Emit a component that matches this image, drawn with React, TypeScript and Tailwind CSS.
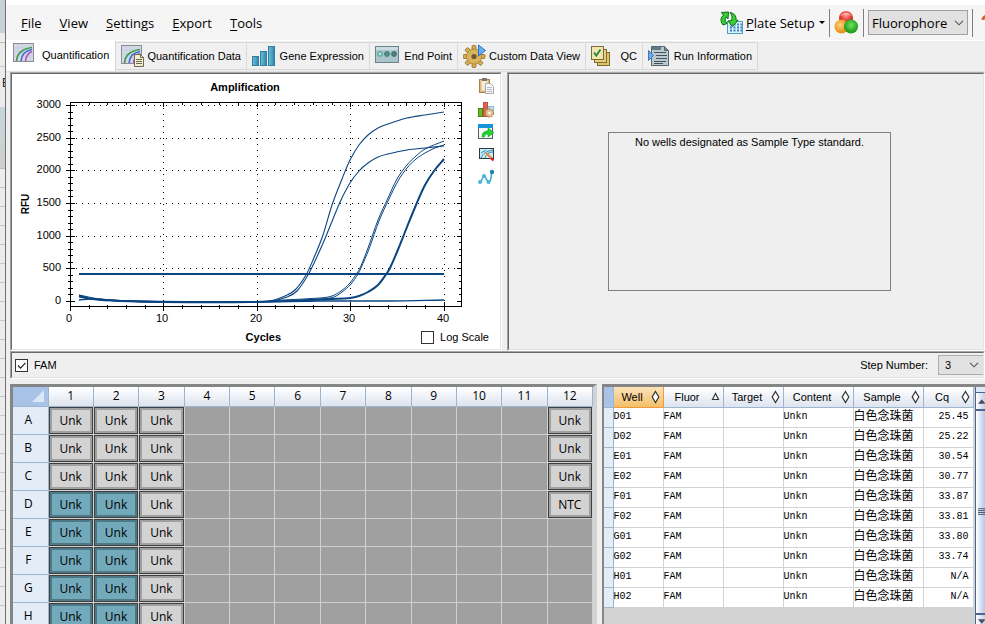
import React from 'react';

const BLUE = '#0b4580';

const Sunken = ({ className = '', children }: { className?: string; children?: React.ReactNode }) => (
  <div className={`border border-t-[#a8a8a8] border-l-[#a0a0a0] border-r-white border-b-white ${className}`}>
    <div className="flex h-full flex-col border border-t-[#696969] border-l-[#696969] border-r-[#e3e3e3] border-b-[#e3e3e3]">
      {children}
    </div>
  </div>
);

/* ---------- icons ---------- */

const CurveBox = () => (
  <>
    <rect x="0.5" y="0.5" width="20" height="18" fill="#d5dae6" stroke="#8b8b93" />
    <path d="M5 1v17M9 1v17M13 1v17M17 1v17M1 5h19M1 9h19M1 13h19" stroke="#c2c9d8" strokeWidth="0.7" />
    <path d="M3.5 18C4 11 8 6 19 4.500" fill="none" stroke="#3d9a4c" strokeWidth="1.6" />
    <path d="M8 18C8.500 12 11 8 19 6.500" fill="none" stroke="#3d6fd0" strokeWidth="1.6" />
    <path d="M12.500 18C13 13 15 10 19 8.500" fill="none" stroke="#b04cc8" strokeWidth="1.6" />
  </>
);

const QuantIcon = () => (
  <svg width="21" height="20" viewBox="0 0 21 20">
    <CurveBox />
  </svg>
);

const QuantDataIcon = () => (
  <svg width="24" height="23" viewBox="0 0 24 23">
    <CurveBox />
    <path d="M13.500 9.500h6l3 3v9h-9z" fill="#f3eecb" stroke="#6d6a55" />
    <path d="M19.500 9.500v3h3M15 14.500h6M15 16.500h6M15 18.500h6" fill="none" stroke="#6d6a55" />
  </svg>
);

const BarsIcon = () => (
  <svg width="24" height="22" viewBox="0 0 24 22">
    <defs>
      <linearGradient id="bars" x1="0" x2="1">
        <stop offset="0" stopColor="#6fc3de" />
        <stop offset="1" stopColor="#2f83a8" />
      </linearGradient>
    </defs>
    <rect x="0.500" y="11.500" width="6" height="9" fill="url(#bars)" stroke="#2f7f9f" />
    <rect x="8.500" y="6.500" width="6" height="14" fill="url(#bars)" stroke="#2f7f9f" />
    <rect x="16.500" y="1.500" width="6" height="19" fill="url(#bars)" stroke="#2f7f9f" />
  </svg>
);

const EndPointIcon = () => (
  <svg width="24" height="20" viewBox="0 0 24 20">
    <rect x="0.500" y="0.500" width="23" height="16" fill="#a9c4ca" stroke="#6a8288" />
    <path d="M1 1h22v3H1z" fill="#c9dde1" />
    <circle cx="5" cy="8" r="2.200" fill="#a8f0e0" stroke="#3b8f84" />
    <circle cx="12" cy="8" r="2.400" fill="#4f9089" stroke="#3d7a74" />
    <circle cx="19" cy="8" r="2.400" fill="#4f7f7c" stroke="#3d6f6c" />
  </svg>
);

const teeth = [0, 45, 90, 135, 180, 225, 270, 315];

const GearIcon = () => (
  <svg width="24" height="24" viewBox="0 0 24 24">
    <g transform="translate(11 12.500)">
      {teeth.map((a) => (
        <rect key={a} x="-2" y="-11" width="4" height="6" rx="1" fill="#d2ab52" stroke="#8f6d28" strokeWidth="0.800" transform={`rotate(${a})`} />
      ))}
      <circle r="7.500" fill="#dcb860" stroke="#a37f35" strokeWidth="0.800" />
      <circle r="6.800" fill="#d9b35b" />
      <circle r="2.600" fill="#6b5a35" />
    </g>
    <path d="M15.500 1v11l7-5.500z" fill="#6aaef0" stroke="#2f6fc0" />
  </svg>
);

const QcIcon = () => (
  <svg width="20" height="21" viewBox="0 0 20 21">
    <rect x="6.500" y="6.500" width="12" height="13" fill="#e0c468" stroke="#7d6b35" />
    <rect x="3.500" y="3.500" width="12" height="13" fill="#e8cf7c" stroke="#7d6b35" />
    <rect x="0.500" y="0.500" width="12" height="13" fill="#f2e6b0" stroke="#7d6b35" />
    <path d="M3 6.500l2.300 3L9.500 3.500" fill="none" stroke="#2f8a46" strokeWidth="2" />
  </svg>
);

const RunInfoIcon = () => (
  <svg width="22" height="21" viewBox="0 0 22 21">
    <path d="M3.500 0.500h13l4 4v15h-17z" fill="#b8c9d0" stroke="#56666e" />
    <path d="M16.500 0.500v4h4" fill="#6c8693" stroke="#56666e" />
    <path d="M4 1h9v3H4z" fill="#5f7986" />
    <path d="M6 6.500h12M8 9.500h11M8 12.500h11M6 15.500h12M6 17.500h9" stroke="#475258" />
    <path d="M0.500 4.500v10l5-5z" fill="#6aaef0" stroke="#3a78b8" />
  </svg>
);

const PlateSetupIcon = () => (
  <svg width="25" height="24" viewBox="0 0 25 24">
    <rect x="8.500" y="10.500" width="15" height="12" fill="#d8f1fb" stroke="#4e9fc4" />
    <path d="M11 13.500h12M11 16.500h12M11 19.500h12" stroke="#3b7fc0" strokeWidth="2" strokeDasharray="2 1.500" />
    <path d="M4 14C1 10 1.500 6 4.500 4.500L2.500 1.500 9.500 1 9 8 7 6C5.500 8 6 10 8 12.500z" fill="#35cf35" stroke="#11681a" />
    <path d="M11 1.500C15 2 17.500 5 17 9l2 .5-5.500 6L9 10l3.500-.5C13.500 6.500 13 4 11 1.500z" fill="#35d035" stroke="#11681a" />
  </svg>
);

const SpheresIcon = () => (
  <svg width="25" height="25" viewBox="0 0 25 25">
    <defs>
      <radialGradient id="sr" cy="0.3"><stop offset="0" stopColor="#ff9c90" /><stop offset="1" stopColor="#d8211c" /></radialGradient>
      <radialGradient id="so" cx="0.4" cy="0.4"><stop offset="0" stopColor="#ffd37a" /><stop offset="1" stopColor="#e8941c" /></radialGradient>
      <radialGradient id="sg" cy="0.4"><stop offset="0" stopColor="#6fe45c" /><stop offset="1" stopColor="#1f9e22" /></radialGradient>
    </defs>
    <circle cx="12" cy="8" r="7" fill="url(#sr)" />
    <circle cx="7.500" cy="16.500" r="7" fill="url(#so)" />
    <circle cx="17" cy="16.500" r="7" fill="url(#sg)" />
    <path d="M6 6C8 2 16 2 18 6c-3-1.500-9-1.500-12 0z" fill="#fff" opacity="0.400" />
  </svg>
);

const ClipboardIcon = () => (
  <svg width="16" height="17" viewBox="0 0 16 17">
    <rect x="0.500" y="1.500" width="10" height="13" fill="#dfb878" stroke="#a88448" />
    <rect x="2.500" y="2.500" width="6" height="10" fill="#f5ecd8" />
    <rect x="3" y="0" width="5" height="3" fill="#777" />
    <path d="M6.500 5.500h5l3 3v7h-8z" fill="#fafafa" stroke="#a8a8a8" />
    <path d="M8 9.500h5M8 11.500h5M8 13.500h5" stroke="#b5bcc5" />
  </svg>
);

const ChartSettingsIcon = () => (
  <svg width="17" height="16" viewBox="0 0 17 16">
    <rect x="10.500" y="4.500" width="5" height="8" fill="#bfe4f0" stroke="#82bdd2" />
    <rect x="5.500" y="0.500" width="4" height="14" fill="#df6258" stroke="#c04c44" />
    <rect x="0.500" y="6.500" width="4" height="8" fill="#6fb820" stroke="#3e8a10" />
    <circle cx="11.500" cy="11" r="3.800" fill="#e2bd8e" stroke="#b78e5b" strokeWidth="1.800" strokeDasharray="1.800 1" />
    <circle cx="11.500" cy="11" r="3.300" fill="#e2bd8e" />
    <circle cx="11.500" cy="11" r="1.300" fill="#fff" />
  </svg>
);

const ExportIcon = () => (
  <svg width="17" height="16" viewBox="0 0 17 16">
    <rect x="0.500" y="0.500" width="14" height="14" fill="#f4f7fa" stroke="#555f68" />
    <path d="M0 0h15v4H0z" fill="#1795dc" />
    <path d="M4 13C4 9 6 7 10 7V4l6 4.500-6 4.500v-3C7.500 10 6.500 11 6.500 13z" fill="#1fd52c" stroke="#109a1c" strokeWidth="0.600" />
  </svg>
);

const EditImageIcon = () => (
  <svg width="16" height="16" viewBox="0 0 16 16">
    <rect x="0.500" y="1.500" width="14" height="10" fill="#c9eef8" stroke="#303840" />
    <path d="M2 11C4 6 8 4 14 3M6 11c1-4 4-6 8-6M2 6l5-3" fill="none" stroke="#2a8bb0" />
    <path d="M7 6l6 6" stroke="#f08a3c" strokeWidth="2.400" />
    <path d="M12 11l2.500 2.500" stroke="#c02c2c" strokeWidth="2.400" />
  </svg>
);

const PointsIcon = () => (
  <svg width="17" height="17" viewBox="0 0 17 17">
    <path d="M2 13C3.500 14 4.500 7 6 7s3 6 5 6 2-6 3-10" fill="none" stroke="#36a5c8" strokeWidth="1.500" />
    <circle cx="2" cy="13" r="2" fill="#46b5d6" />
    <circle cx="6" cy="7" r="2" fill="#46b5d6" />
    <circle cx="10.500" cy="13" r="2" fill="#46b5d6" />
    <circle cx="14" cy="3" r="2.200" fill="#1f87ab" />
  </svg>
);

const Chevron = () => (
  <svg width="10" height="6" viewBox="0 0 10 6" className="pointer-events-none absolute right-1 top-1/2 -translate-y-1/2">
    <path d="M1 .8l4 4 4-4" fill="none" stroke="#555" strokeWidth="1.100" />
  </svg>
);

const CheckBox = ({ label, checked = false }: { label: string; checked?: boolean }) => (
  <label className="flex items-center gap-1.5 leading-4">
    <span className="grid">
      <input type="checkbox" defaultChecked={checked} className="peer col-start-1 row-start-1 size-[13px] appearance-none border border-[#333] bg-white" />
      <svg viewBox="0 0 13 13" className="pointer-events-none invisible col-start-1 row-start-1 size-[13px] peer-checked:visible">
        <path d="M3 6.500l2.500 2.700L10.500 3.800" fill="none" stroke="#222" strokeWidth="1.200" />
      </svg>
    </span>
    {label}
  </label>
);

/* ---------- amplification chart ---------- */

const cx = (c: number) => 70 + c * 9.34;
const cy = (r: number) => 301 - (r * 196) / 3000;

const curves: { w: number; pts: string }[] = [
  { w: 1.1, pts: '79,295 88,298 110,300 135,301 163,302 250,302 270,301 285,296 295,290 306,275 313,260 323,235 332,205 342,179 350,160 359,145 368,135 378,128 388,124 407,118 425,115 444,112' },
  { w: 1.1, pts: '79,296 92,299 120,301 163,302 250,302 272,301 287,297 297,291 308,275 315,261 324,241 333,219 341,200 350,183 359,171 368,163 378,157 388,154 407,150 425,148 444,146' },
  { w: 1, pts: '79,295 100,299 130,301 250,302 283,300 320,298 332,296 341,291 350,283 357,273 360,268 368,248 378,220 388,198 397,179 407,165 416,156 425,149 444,141' },
  { w: 1, pts: '79,297 100,300 163,302 250,302 290,301 322,299 334,297 342,292 351,284 358,274 361,268 369,249 379,221 389,199 398,181 407,168 416,159 425,153 435,148 444,145' },
  { w: 2, pts: '79,296 92,299 120,301 163,302 250,302 310,300 332,299 350,298 359,296 368,292 378,285 387,273 390,268 397,252 407,227 416,205 425,185 434,171 444,159' },
  { w: 1.5, pts: '79,300 90,299 130,301 250,302 320,301 390,301 444,300' },
];

/* Catmull-Rom spline through the measured points */
const spline = (pts: string) => {
  const p = pts.split(' ').map((s) => s.split(',').map(Number));
  let d = `M${p[0][0]} ${p[0][1]}`;
  for (let i = 0; i < p.length - 1; i++) {
    const a = p[Math.max(i - 1, 0)];
    const b = p[i];
    const c = p[i + 1];
    const e = p[Math.min(i + 2, p.length - 1)];
    const step = (c[0] - b[0]) / 3;
    const s1 = (c[1] - a[1]) / (c[0] - a[0]);
    const s2 = (e[1] - b[1]) / (e[0] - b[0]);
    d += `C${b[0] + step} ${b[1] + s1 * step} ${c[0] - step} ${c[1] - s2 * step} ${c[0]} ${c[1]}`;
  }
  return d;
};

const AmplificationChart = () => (
  <svg width="466" height="232" viewBox="12 97 466 232" className="block" fontFamily="'Liberation Sans', Arial, sans-serif" fontSize="11">
    {[500, 1000, 1500, 2000, 2500, 3000].map((r) => (
      <line key={r} x1="76" x2="461" y1={Math.round(cy(r)) + 0.5} y2={Math.round(cy(r)) + 0.5} stroke="#000" strokeDasharray="1 5" shapeRendering="crispEdges" />
    ))}
    {[10, 20, 30, 40].map((c) => (
      <line key={c} y1="108" y2="306" x1={Math.round(cx(c)) + 0.5} x2={Math.round(cx(c)) + 0.5} stroke="#000" strokeDasharray="1 5" shapeRendering="crispEdges" />
    ))}
    <rect x="70.500" y="102.500" width="391" height="204" fill="none" stroke="#000" shapeRendering="crispEdges" />
    {Array.from({ length: 31 }, (_, i) => {
      const y = Math.round(cy(i * 100)) + 0.5;
      const major = i % 5 === 0;
      return <path key={i} d={`M${major ? 66 : 68} ${y}H${major ? 75 : 73}M${major ? 457 : 459} ${y}H461`} stroke="#000" shapeRendering="crispEdges" />;
    })}
    {Array.from({ length: 21 }, (_, i) => {
      const x = Math.round(cx(i * 2)) + 0.5;
      const major = i % 5 === 0;
      return <path key={i} d={`M${x} ${major ? 302 : 305}V${major ? 311 : 309}M${x} 102V${major ? 107 : 105}`} stroke="#000" shapeRendering="crispEdges" />;
    })}
    {[0, 500, 1000, 1500, 2000, 2500, 3000].map((r) => (
      <text key={r} x="61" y={Math.round(cy(r)) + 3} textAnchor="end">{r}</text>
    ))}
    {[0, 10, 20, 30, 40].map((c) => (
      <text key={c} x={Math.round(cx(c)) - 1} y="322" textAnchor="middle">{c}</text>
    ))}
    <text transform="translate(29 204) rotate(-90)" textAnchor="middle" fontWeight="bold" fontSize="10">RFU</text>
    <path d="M79 274H444" stroke={BLUE} strokeWidth="2" />
    {curves.map((c, i) => (
      <path key={i} d={spline(c.pts)} fill="none" stroke={BLUE} strokeWidth={c.w} />
    ))}
  </svg>
);

/* ---------- data ---------- */

const menus = ['File', 'View', 'Settings', 'Export', 'Tools'];

const tabs = [
  { label: 'Quantification Data', icon: <QuantDataIcon />, width: 'w-[131px]' },
  { label: 'Gene Expression', icon: <BarsIcon />, width: 'w-[123px]' },
  { label: 'End Point', icon: <EndPointIcon />, width: 'w-[88px]' },
  { label: 'Custom Data View', icon: <GearIcon />, width: 'w-[128px]' },
  { label: 'QC', icon: <QcIcon />, width: 'w-[57px]' },
  { label: 'Run Information', icon: <RunInfoIcon />, width: 'w-[115px]' },
];

const plateCols = [1, 2, 3, 4, 5, 6, 7, 8, 9, 10, 11, 12];
const plateRows = ['A', 'B', 'C', 'D', 'E', 'F', 'G', 'H'];

const wellLabel = (row: number, col: number) => {
  if (col <= 3) return 'Unk';
  if (col === 12 && row < 3) return 'Unk';
  if (col === 12 && row === 3) return 'NTC';
  return '';
};

const results = [
  ['D01', '25.45'],
  ['D02', '25.22'],
  ['E01', '30.54'],
  ['E02', '30.77'],
  ['F01', '33.87'],
  ['F02', '33.81'],
  ['G01', '33.80'],
  ['G02', '33.74'],
  ['H01', 'N/A'],
  ['H02', 'N/A'],
];

const resultCols = [
  { label: 'Well', width: 'w-[50px]' },
  { label: 'Fluor', width: 'w-[60px]' },
  { label: 'Target', width: 'w-[60px]' },
  { label: 'Content', width: 'w-[70px]' },
  { label: 'Sample', width: 'w-[70px]' },
  { label: 'Cq', width: 'w-[50px]' },
];

const SortMark = ({ up }: { up: boolean }) => (
  <svg width="9" height="14" viewBox="0 0 9 14" className="shrink-0">
    {up ? (
      <path d="M1.500 9.500L4.500 3.500l3 6z" fill="#fff" stroke="#333" strokeWidth="1.200" />
    ) : (
      <path d="M4.500 1.500l3.300 5.500-3.300 5.500L1.200 7z" fill="#fff" stroke="#333" strokeWidth="1.200" />
    )}
  </svg>
);

/* ---------- sections ---------- */

const BackgroundSheet = () => (
  <div className="flex w-[5px] shrink-0 flex-col overflow-hidden bg-[#ececec]">
    <div className="h-[33px] shrink-0 bg-[#c6d1d5]" />
    <div className="h-[10px] shrink-0 border-b border-[#bbb] bg-[#eee]" />
    <div className="h-[24px] shrink-0 border-b border-[#ccc]" />
    <div className="h-[40px] shrink-0 pl-0.5 pt-2 text-[12px] leading-4 text-[#222]">E</div>
    <div className="h-[62px] shrink-0 border-b border-[#bbb] bg-linear-to-b from-[#c6d6da] to-[#cfcfcf]" />
    {Array.from({ length: 25 }, (_, i) => (
      <div key={i} className="h-[19px] shrink-0 border-b border-[#c8c8c8]" />
    ))}
  </div>
);

const MenuBar = () => (
  <header className="flex h-[35px] shrink-0 items-center bg-[#f5f5f5] font-['Open_Sans','Noto_Sans',sans-serif] text-[13px] leading-5">
    <nav className="flex gap-[18px] pl-[15px]">
      {menus.map((m) => (
        <button key={m}>
          <span className="underline underline-offset-2">{m[0]}</span>
          {m.slice(1)}
        </button>
      ))}
    </nav>
    <div className="ml-auto flex shrink-0 items-center">
      <button className="flex items-center gap-0.5">
        <PlateSetupIcon />
        <span className="w-[71px] whitespace-nowrap text-left">
          <span className="underline underline-offset-2">P</span>late Setup
        </span>
        <svg width="6" height="3" viewBox="0 0 6 3"><path d="M0 0h6L3 3z" /></svg>
      </button>
      <div className="ml-1 h-7 w-px bg-[#808080]" />
      <button aria-label="Fluorophores" className="px-1"><SpheresIcon /></button>
      <div className="h-7 w-px bg-[#808080]" />
      <div className="relative mx-1">
        <select aria-label="Display mode" className="block h-[25px] w-[100px] appearance-none border border-[#a0a0a0] bg-[#e1e1e1] pl-[3px]">
          <option>Fluorophore</option>
        </select>
        <Chevron />
      </div>
      <div className="h-7 w-px bg-[#808080]" />
      <button aria-label="Help" className="ml-2 block w-1 overflow-hidden">
        <svg width="12" height="20" viewBox="0 0 12 20"><path d="M2 7C2 2 10 2 10 7c0 3-4 3-4 7" fill="none" stroke="#d9652b" strokeWidth="3" /></svg>
      </button>
    </div>
  </header>
);

const TabStrip = () => (
  <div role="tablist" className="flex h-[31px] shrink-0 items-end border-t border-white">
    <button role="tab" aria-selected="true" className="flex h-[30px] w-[110px] items-start gap-2 whitespace-nowrap border-r border-[#d5d5d5] bg-white pl-[7px] pt-0.5 leading-6">
      <QuantIcon />
      Quantification
    </button>
    {tabs.map((t) => (
      <button key={t.label} role="tab" aria-selected="false" className={`mb-px flex h-7 items-center justify-between whitespace-nowrap border border-l-0 border-[#d9d9d9] bg-[#f0f0f0] pl-[5px] pr-[5px] ${t.width}`}>
        {t.icon}
        {t.label}
      </button>
    ))}
  </div>
);

const Plate = () => (
  <table className="w-full table-fixed border-collapse font-['Open_Sans','Noto_Sans',sans-serif] text-[12px] leading-4">
    <thead>
      <tr className="h-[19px]">
        <th aria-label="All wells" className="w-[35px] border-r border-b border-[#9db6d0] bg-[#a8c3e8] p-0">
          <svg width="12" height="12" viewBox="0 0 12 12" className="ml-auto mr-1"><path d="M12 0v12H0z" fill="#dbe8f8" /></svg>
        </th>
        {plateCols.map((c) => (
          <th key={c} className="border-r border-b border-[#9db6d0] bg-linear-to-b from-white to-[#dde4ef] p-0 font-normal">{c}</th>
        ))}
      </tr>
    </thead>
    <tbody>
      {plateRows.map((r, ri) => (
        <tr key={r} className="h-7">
          <th className="border-r border-b border-[#9db6d0] bg-[#e4ecf7] p-0 pr-1 font-normal">{r}</th>
          {plateCols.map((c) => {
            const label = wellLabel(ri, c);
            const on = ri >= 3 && c <= 2;
            return (
              <td key={c} className="border-r border-b border-[#d0d0d0] bg-[#a0a0a0] p-0">
                {label && (
                  <div className="border border-[#3f3f3f]">
                    <div className={`h-[25px] border-2 text-center leading-[21px] ${on ? 'border-[#4d7987] bg-[#72aabb]' : 'border-[#a0a0a0] bg-[#d3d3d3]'}`}>{label}</div>
                  </div>
                )}
              </td>
            );
          })}
        </tr>
      ))}
    </tbody>
  </table>
);

const Results = () => (
  <table className="w-[369px] shrink-0 table-fixed border-collapse self-start">
    <thead>
      <tr className="h-5">
        <th aria-label="Row" className="w-[9px] border-r border-b border-[#9db6d0] bg-[#a8c3e8] p-0" />
        {resultCols.map((c, i) => (
          <th key={c.label} className={`border-r border-b p-0 font-normal ${c.width} ${i === 0 ? 'border-[#f09a3c] bg-linear-to-b from-[#fbe3b8] to-[#f3bf66]' : 'border-[#9db6d0] bg-linear-to-b from-white to-[#dde4ef]'}`}>
            <div className="flex items-center pr-[3px] leading-4">
              <span className="flex-1 text-center">{c.label}</span>
              <SortMark up={i === 1} />
            </div>
          </th>
        ))}
      </tr>
    </thead>
    <tbody className="font-['Liberation_Mono','Noto_Sans_CJK_SC',monospace] text-[10px] leading-4">
      {results.map(([well, cq]) => (
        <tr key={well} className="h-5">
          <td className="border-r border-b border-[#9db6d0] bg-[#e4ecf7] p-0" />
          {[well, 'FAM', '', 'Unkn', '白色念珠菌', cq].map((v, i) => (
            <td key={i} className={`border-r border-b border-[#d3d3d3] bg-white p-0 whitespace-nowrap ${i === 5 ? 'pr-1 text-right' : ''} ${i === 4 ? 'text-[12px]' : ''}`}>{v}</td>
          ))}
        </tr>
      ))}
    </tbody>
  </table>
);

const ScrollBar = () => (
  <div className="ml-px flex min-w-0 flex-1 flex-col overflow-hidden border-l border-[#4a6594] bg-[#c5d5ec]">
    <div className="h-1.5 shrink-0 border-b border-[#4a6594] bg-[#dce8f8]" />
    <button aria-label="Scroll up" className="flex h-4 shrink-0 items-center bg-linear-to-r from-white to-[#c5d0e4] pl-0.5">
      <svg width="8" height="5" viewBox="0 0 8 5"><path d="M0 5l4-5 4 5z" fill="#44506a" /></svg>
    </button>
    <div className="flex flex-1 items-center border-y-2 border-[#4a6594] bg-linear-to-r from-white to-[#b7c8e2] pl-0.5">
      <svg width="8" height="8" viewBox="0 0 8 8"><path d="M0 .5h8M0 2.500h8M0 4.500h8M0 6.500h8" stroke="#44506a" /></svg>
    </div>
    <button aria-label="Scroll down" className="flex h-[9px] shrink-0 items-end bg-linear-to-r from-white to-[#c5d0e4] pl-0.5">
      <svg width="8" height="5" viewBox="0 0 8 5"><path d="M0 0l4 5 4-5z" fill="#44506a" /></svg>
    </button>
  </div>
);

export default function App() {
  return (
    <div className="flex h-screen overflow-hidden bg-[#efefef] font-['Liberation_Sans',Arial,sans-serif] text-[11px] text-black">
      <BackgroundSheet />
      <div className="flex min-w-0 flex-1 flex-col border-l border-[#707070]">
        <div className="h-[5px] shrink-0 bg-white" />
        <MenuBar />
        <TabStrip />
        <main className="flex min-h-0 flex-1 flex-col border-t border-[#e0e0e0] pl-1">
          <div className="flex h-[279px] shrink-0 gap-[5px]">
            <Sunken className="w-[492px] bg-white">
              <div className="flex">
                <div>
                  <h2 className="h-[23px] pt-[5px] text-center font-bold leading-4">Amplification</h2>
                  <AmplificationChart />
                </div>
                <div className="flex h-[112px] flex-col items-center justify-between pt-1">
                  <button aria-label="Copy"><ClipboardIcon /></button>
                  <button aria-label="Chart settings"><ChartSettingsIcon /></button>
                  <button aria-label="Export chart"><ExportIcon /></button>
                  <button aria-label="Edit image"><EditImageIcon /></button>
                  <button aria-label="Trace styles"><PointsIcon /></button>
                </div>
              </div>
              <div className="flex items-center justify-end gap-[140px] pr-[11px]">
                <span className="font-bold leading-4">Cycles</span>
                <CheckBox label="Log Scale" />
              </div>
            </Sunken>
            <Sunken className="min-w-0 flex-1">
              <div className="ml-[99px] mt-[58px] h-[159px] w-[283px] border border-[#808080] pt-px text-center leading-4">
                No wells designated as Sample Type standard.
              </div>
            </Sunken>
          </div>

          <Sunken className="h-7 shrink-0">
            <div className="flex flex-1 items-center justify-between pl-[3px]">
              <CheckBox label="FAM" checked />
              <label className="flex items-center gap-2.5">
                Step Number:
                <span className="relative">
                  <select className="block h-5 w-[45px] appearance-none border border-r-0 border-[#adadad] bg-[#e1e1e1] pl-1.5">
                    <option>3</option>
                  </select>
                  <Chevron />
                </span>
              </label>
            </div>
          </Sunken>

          <div className="mt-[5px] flex min-h-0 flex-1 gap-[5px]">
            <div className="w-[587px] shrink-0 overflow-hidden border-t-3 border-l-3 border-r-4 border-[#858585] border-r-[#d3d3d3]">
              <Plate />
            </div>
            <div className="flex min-w-0 flex-1 overflow-hidden border-t-3 border-l-2 border-[#858585] bg-[#d3d3d3]">
              <Results />
              <ScrollBar />
            </div>
          </div>
        </main>
      </div>
    </div>
  );
}
